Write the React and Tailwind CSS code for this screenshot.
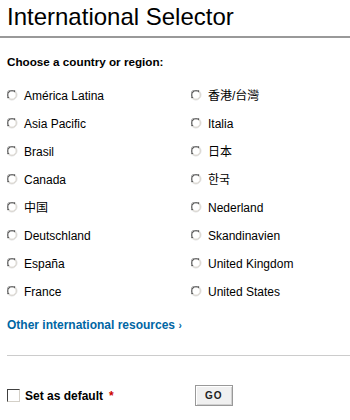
import { useState } from "react";

const left = ["América Latina", "Asia Pacific", "Brasil", "Canada", "中国", "Deutschland", "España", "France"];
const right = ["香港/台灣", "Italia", "日本", "한국", "Nederland", "Skandinavien", "United Kingdom", "United States"];

function Radio() {
  return (
    <svg width="12" height="12" viewBox="0 0 12 12" className="shrink-0">
      <circle cx="6" cy="6" r="5.5" fill="#fff" />
      <path d="M1.2 8.5 A5 5 0 0 1 8.5 1.2" stroke="#808080" strokeWidth="1" fill="none" />
      <path d="M2 8 A4 4 0 0 1 8 2" stroke="#404040" strokeWidth="1" fill="none" />
      <path d="M8.5 1.2 A5 5 0 0 1 1.2 8.5" stroke="#e0e0e0" strokeWidth="1" fill="none" />
      <path d="M8 2 A4 4 0 0 1 2 8" stroke="#d4d0c8" strokeWidth="1" fill="none" />
    </svg>
  );
}

function Option({ label }) {
  return (
    <label className="flex items-center h-[28px] gap-[5px] text-[12px] text-black">
      <Radio />
      <span>{label}</span>
    </label>
  );
}

export default function App() {
  const [checked, setChecked] = useState(false);

  return (
    <div
      className="w-[350px] h-[420px] bg-white overflow-hidden"
      style={{ fontFamily: "'Liberation Sans', Arial, 'Noto Sans CJK SC', sans-serif" }}
    >
      <h1 className="px-[7px] pt-[3px] h-[36px] text-[24px] leading-[28px] text-black">International Selector</h1>
      <div className="h-[2px] bg-[#999999]" />

      <p className="px-[7px] mt-[16px] h-[16px] leading-[16px] text-[11.7px] font-bold text-black">Choose a country or region:</p>

      <div className="grid grid-cols-[184px_1fr] mt-[12px] pl-[7px]">
        <div className="flex flex-col">
          {left.map((l) => (
            <Option key={l} label={l} />
          ))}
        </div>
        <div className="flex flex-col">
          {right.map((l) => (
            <Option key={l} label={l} />
          ))}
        </div>
      </div>

      <a href="#" className="block px-[7px] mt-[11px] h-[16px] leading-[16px] text-[12px] font-bold text-[#0066a4]">
        Other international resources <span className="text-[10px]">›</span>
      </a>

      <div className="ml-[7px] mt-[22px] h-px bg-[#cccccc]" />

      <div className="flex items-center pl-[7px] mt-[29px]">
        <button
          onClick={() => setChecked(!checked)}
          className="w-[13px] h-[13px] border border-t-[#404040] border-l-[#404040] border-b-[#d4d0c8] border-r-[#d4d0c8] bg-white shrink-0"
        />
        <span className="ml-[5px] text-[12px] font-bold text-black">Set as default</span>
        <span className="ml-[6px] text-[12px] font-bold text-[#cc0000]">*</span>
        <button className="ml-[81px] w-[38px] h-[21px] border border-[#999999] bg-[#f0f0f0] text-[10px] font-bold text-[#222] tracking-[1px] shadow-[inset_1px_1px_0_#fff,inset_-1px_-1px_0_#d0d0d0]">
          GO
        </button>
      </div>
    </div>
  );
}
